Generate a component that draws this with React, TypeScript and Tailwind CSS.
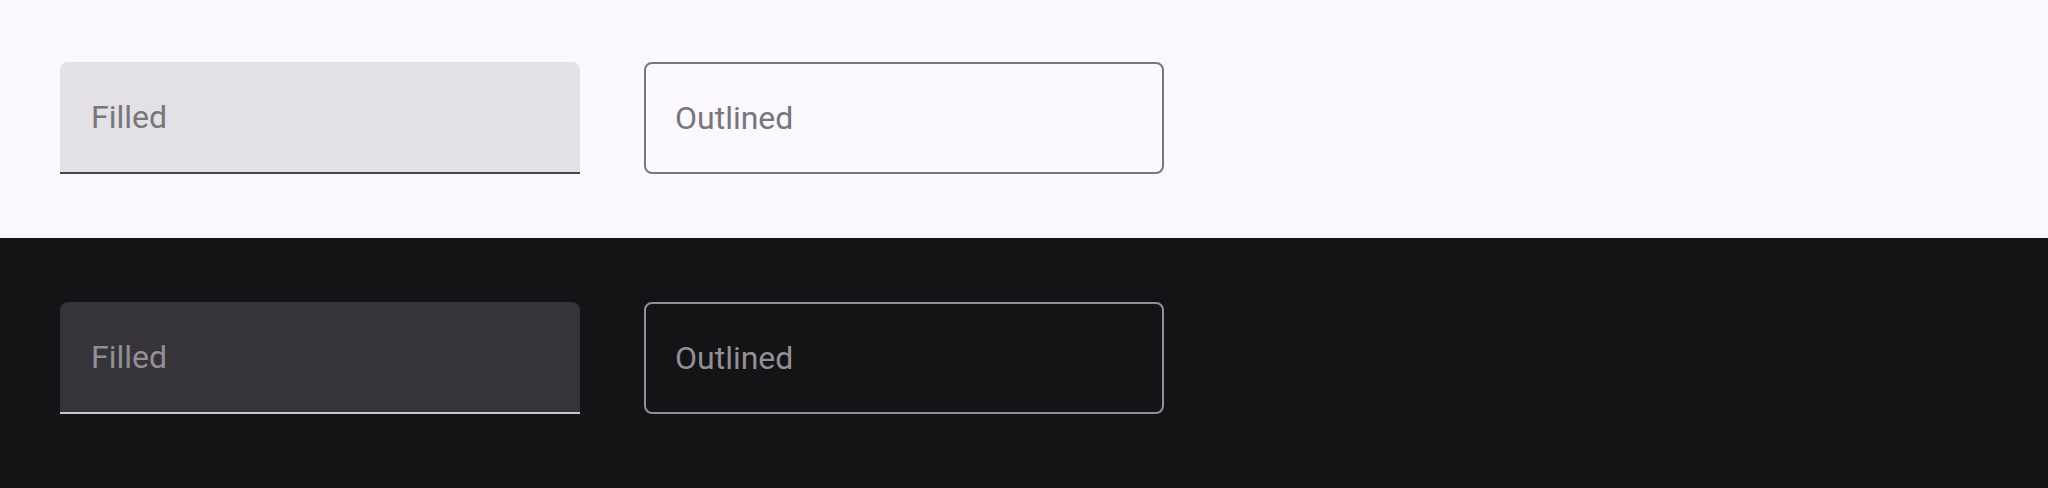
const font = { fontFamily: "Roboto, 'Liberation Sans', sans-serif" };

type Theme = "light" | "dark";

const FilledField = ({ theme }: { theme: Theme }) => (
  <div
    className={`flex h-[112px] w-[520px] items-center rounded-t-[8px] border-b-2 pl-[31px] ${
      theme === "light"
        ? "bg-[#e3e1e5] border-[#49454f]"
        : "bg-[#36343a] border-[#cac4d0]"
    }`}
  >
    <input
      placeholder="Filled"
      className={`w-full bg-transparent text-[32px] leading-none outline-none ${
        theme === "light"
          ? "placeholder:text-[#78757c]"
          : "placeholder:text-[#938f96]"
      }`}
      style={font}
    />
  </div>
);

const OutlinedField = ({ theme }: { theme: Theme }) => (
  <div
    className={`flex h-[112px] w-[520px] items-center rounded-[8px] border-2 pl-[29px] ${
      theme === "light" ? "border-[#79767d]" : "border-[#938f99]"
    }`}
  >
    <input
      placeholder="Outlined"
      className={`w-full bg-transparent text-[32px] leading-none outline-none ${
        theme === "light"
          ? "placeholder:text-[#78757c]"
          : "placeholder:text-[#938f96]"
      }`}
      style={font}
    />
  </div>
);

export default function App() {
  return (
    <div className="flex min-h-screen flex-col">
      {/* Light */}
      <div className="flex gap-[64px] bg-[#faf8fc] px-[60px] pt-[62px] pb-[64px]">
        <FilledField theme="light" />
        <OutlinedField theme="light" />
      </div>

      {/* Dark */}
      <div className="flex flex-1 items-start gap-[64px] bg-[#141316] px-[60px] pt-[64px] pb-[74px]">
        <FilledField theme="dark" />
        <OutlinedField theme="dark" />
      </div>
    </div>
  );
}
